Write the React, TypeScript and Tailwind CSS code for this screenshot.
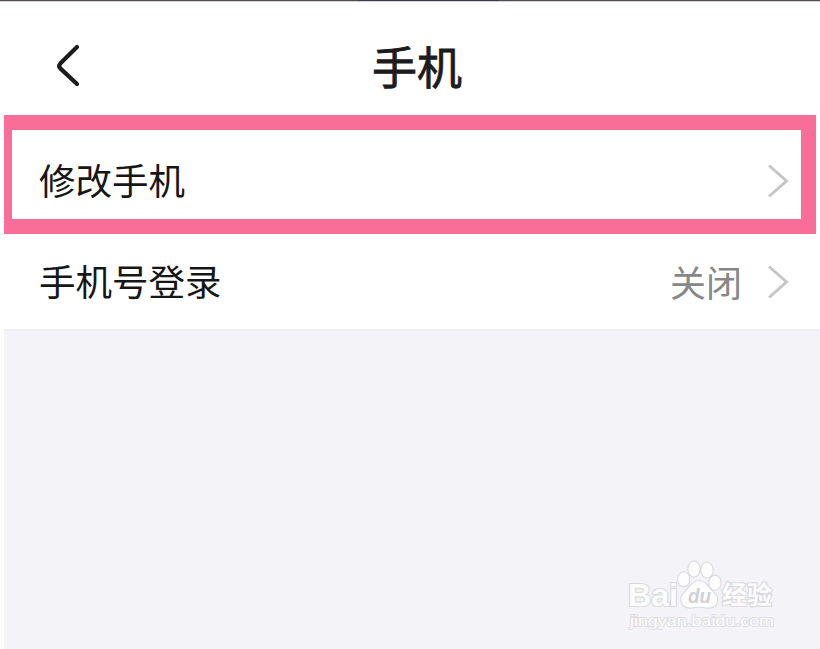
import { ReactNode } from "react";

function BackIcon() {
  return (
    <svg width="28" height="48" viewBox="0 0 28 48" fill="none">
      <path
        d="M24 5 L7.300 21.600 Q5 24 7.300 26.400 L24 42"
        stroke="#1c1c1e"
        strokeWidth="4.2"
        strokeLinecap="round"
        strokeLinejoin="round"
      />
    </svg>
  );
}

function ChevronIcon() {
  return (
    <svg width="24" height="36" viewBox="0 0 24 36" fill="none">
      <path d="M3 2.5 L20.5 18 L3 33.5" stroke="#c6c6c8" strokeWidth="3" />
    </svg>
  );
}

function Row({ label, value }: { label: string; value?: ReactNode }) {
  return (
    <div className="flex h-full items-center justify-between">
      <span className="pb-0.5 text-[36.5px] leading-none text-[#161616]">{label}</span>
      <div className="flex items-center gap-6">
        {value && <span className="pb-[3px] text-[36px] leading-none text-[#878787]">{value}</span>}
        <ChevronIcon />
      </div>
    </div>
  );
}

function Watermark() {
  return (
    <svg
      className="absolute left-[620px] top-[555px]"
      width="160"
      height="80"
      viewBox="0 0 160 80"
      fill="#fdfdfe"
      stroke="#d9d9de"
      strokeWidth="2.2"
      paintOrder="stroke"
    >
      <text
        x="8"
        y="50.5"
        textLength="50"
        lengthAdjust="spacingAndGlyphs"
        className="font-['Liberation_Sans',sans-serif] text-[31px] font-bold"
      >
        Bai
      </text>
      <ellipse cx="63.7" cy="24.300" rx="5.6" ry="7" />
      <ellipse cx="74" cy="14" rx="5.6" ry="7.6" />
      <ellipse cx="87" cy="15" rx="5.6" ry="7.4" />
      <ellipse cx="95" cy="27.7" rx="5.6" ry="7" />
      <path d="M79 26 C73 26 71 31 67 35 C63 39 60.500 41 61.500 46 C63 52 68 53 72 52.500 Q79 51 86 52.500 C91 53 96 52 97 46 C98 41 95 39 91 35 C87 31 85 26 79 26 Z" />
      <text
        x="68"
        y="48"
        textLength="23"
        lengthAdjust="spacingAndGlyphs"
        fill="#d0d0d6"
        stroke="none"
        className="font-['Liberation_Sans',sans-serif] text-[21px] font-bold italic"
      >
        du
      </text>
      <text
        x="102"
        y="49"
        textLength="50"
        lengthAdjust="spacingAndGlyphs"
        className="font-['Noto_Sans_CJK_SC',sans-serif] text-[25px] font-bold"
      >
        经验
      </text>
      <text
        x="10"
        y="71"
        textLength="144"
        lengthAdjust="spacingAndGlyphs"
        stroke="#dedee3"
        strokeWidth="1.8"
        className="font-['Liberation_Sans',sans-serif] text-[15.5px]"
      >
        jingyan.baidu.com
      </text>
    </svg>
  );
}

export default function App() {
  return (
    <div className="relative flex h-[649px] w-[820px] flex-col overflow-hidden bg-white font-['Noto_Sans_CJK_SC',sans-serif]">
      {/* Borde inferior de la barra de estado */}
      <div className="flex h-px shrink-0 bg-[#514c50]">
        <div className="ml-[359px] w-[140px] bg-[#3d3a52]" />
      </div>
      <div className="h-px shrink-0 bg-[#d5d2d5]" />

      <header className="grid h-[113px] shrink-0 grid-cols-3 items-center pt-3.5">
        <div className="pl-[53px]">
          <BackIcon />
        </div>
        <h1 className="pl-[14px] text-center text-[45px] leading-none font-normal text-[#1c1c1e] [-webkit-text-stroke:0.8px_#1c1c1e]">
          手机
        </h1>
      </header>

      {/* Opción resaltada */}
      <div className="ml-1 h-[119px] w-[812px] shrink-0 border-t-[15px] border-r-[15px] border-b-[15px] border-l-[8px] border-[#f96e98] pt-[13px] pr-[11px] pl-[27px]">
        <Row label="修改手机" />
      </div>

      <div className="h-[95px] shrink-0 pt-px pr-[30px] pl-[39px]">
        <Row label="手机号登录" value="关闭" />
      </div>

      <div className="ml-1 flex-1 border-t-2 border-[#efeff2] bg-[#f3f3f8]" />
      <Watermark />
    </div>
  );
}
